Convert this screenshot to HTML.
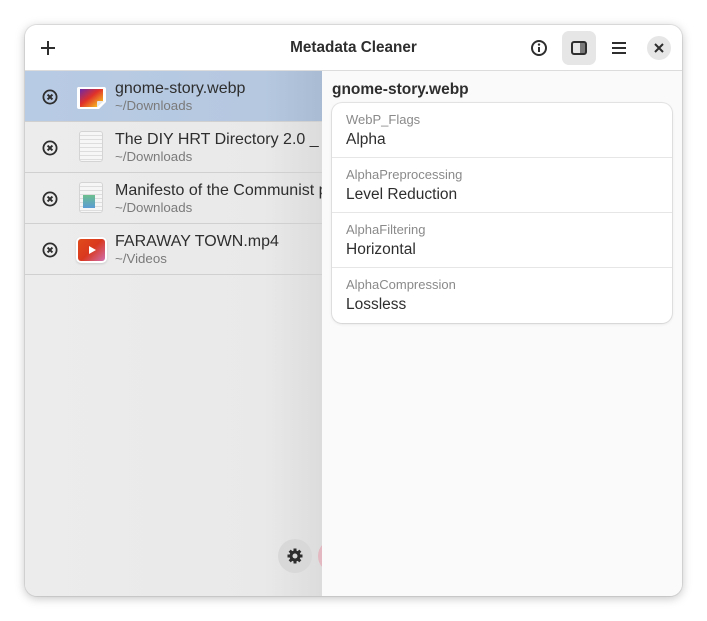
<!DOCTYPE html>
<html><head><meta charset="utf-8"><style>
*{box-sizing:border-box;margin:0;padding:0}
body{width:707px;height:621px;background:#fff;font-family:"Liberation Sans",sans-serif;position:relative;overflow:hidden}
.win{position:absolute;left:25px;top:25px;width:657px;height:571px;border-radius:12px;overflow:hidden;background:#fafafa;box-shadow:0 2px 10px rgba(0,0,0,.25),0 0 0 1px rgba(0,0,0,.08)}
.hdr{position:absolute;left:0;top:0;width:657px;height:46px;background:#fff;border-bottom:1px solid #dcdcdc}
.title{position:absolute;left:0;width:657px;top:14px;text-align:center;font-weight:bold;font-size:15.3px;color:#2e2e2e}
.left{position:absolute;left:0;top:46px;width:297px;height:525px;background:linear-gradient(to right,#ececec 0,#e9e9e9 240px,#dcdcdc 297px)}
.row{position:absolute;left:0;width:297px;height:51px;border-bottom:1px solid #d0d0d0}
.row .n{position:absolute;left:90px;top:9px;font-size:16px;color:#2e2e2e;white-space:nowrap}
.row .p{position:absolute;left:90px;top:27px;font-size:13.3px;color:#7a7a7a}
.ic{position:absolute;left:17px;top:18px}
.right{position:absolute;left:297px;top:46px;width:360px;height:525px;background:#fafafa}
.card{position:absolute;left:10px;top:32px;width:340px;height:220px;background:#fff;border-radius:10px;box-shadow:0 0 0 1px rgba(0,0,0,.08),0 1px 3px rgba(0,0,0,.1)}
.cr{height:55px;border-bottom:1px solid #e6e6e6;padding:9px 0 0 14px}
.cr:last-child{border-bottom:none}
.k{font-size:13px;color:#8a8a8a}
.v{font-size:15.5px;color:#2e2e2e;margin-top:4px}
</style></head><body>
<div class="win">
<div class="hdr">
 <svg style="position:absolute;left:15px;top:15px" width="16" height="16"><path d="M8 1v14M1 8h14" stroke="#2e2e2e" stroke-width="2"/></svg>
 <div class="title">Metadata Cleaner</div>
 <svg style="position:absolute;left:506px;top:15px" width="16" height="16"><circle cx="8" cy="8" r="7" fill="none" stroke="#2e2e2e" stroke-width="2"/><rect x="7" y="7" width="2" height="5" fill="#2e2e2e"/><circle cx="8" cy="4.6" r="1.2" fill="#2e2e2e"/></svg>
 <div style="position:absolute;left:537px;top:6px;width:34px;height:34px;border-radius:7px;background:#e6e6e6"></div>
 <svg style="position:absolute;left:546px;top:16px" width="16" height="14"><rect x="1" y="1" width="14" height="12" rx="2" fill="none" stroke="#2e2e2e" stroke-width="2"/><rect x="9" y="1" width="6" height="12" fill="#2e2e2e" opacity=".6"/></svg>
 <svg style="position:absolute;left:586px;top:16px" width="16" height="14"><path d="M1 2h14M1 7h14M1 12h14" stroke="#2e2e2e" stroke-width="2"/></svg>
 <div style="position:absolute;left:622px;top:11px;width:24px;height:24px;border-radius:50%;background:#e6e6e6"></div>
 <svg style="position:absolute;left:629px;top:18px" width="10" height="10"><path d="M1 1l8 8M9 1l-8 8" stroke="#2e2e2e" stroke-width="2"/></svg>
</div>
<div class="left">
 <div class="row" style="top:0;background:linear-gradient(to right,#b8cbe4 0,#b5c8e0 240px,#a9bbd3 297px)">
  <svg class="ic" width="16" height="16"><circle cx="8" cy="8" r="6.6" fill="none" stroke="#2e2e2e" stroke-width="1.8"/><path d="M5.6 5.6l4.8 4.8M10.4 5.6l-4.8 4.8" stroke="#2e2e2e" stroke-width="2"/></svg>
  <svg style="position:absolute;left:51px;top:15px" width="31" height="24"><defs><linearGradient id="g1" x1="0" y1="0" x2="1" y2="1"><stop offset="0" stop-color="#6b2aa8"/><stop offset=".45" stop-color="#e0302a"/><stop offset=".85" stop-color="#f5b323"/></linearGradient></defs><path d="M2 1h26a2 2 0 0 1 2 2v13l-7 7H3a2 2 0 0 1-2-2V3a2 2 0 0 1 1-2z" fill="#fff"/><path d="M4 3h23v12l-6 6H4z" fill="url(#g1)"/><path d="M21 21v-5a1 1 0 0 1 1-1h6z" fill="#e8e8e8"/></svg>
  <div class="n">gnome-story.webp</div><div class="p">~/Downloads</div></div>
 <div class="row" style="top:51px">
  <svg class="ic" width="16" height="16"><circle cx="8" cy="8" r="6.6" fill="none" stroke="#2e2e2e" stroke-width="1.8"/><path d="M5.6 5.6l4.8 4.8M10.4 5.6l-4.8 4.8" stroke="#2e2e2e" stroke-width="2"/></svg>
  <div style="position:absolute;left:54px;top:9px;width:24px;height:31px;border-radius:3px;background:repeating-linear-gradient(#f6f6f6 0 3px,#ddd 3px 4px);border:1px solid #d4d4d4"></div>
  <div class="n">The DIY HRT Directory 2.0 _ T</div><div class="p">~/Downloads</div></div>
 <div class="row" style="top:102px">
  <svg class="ic" width="16" height="16"><circle cx="8" cy="8" r="6.6" fill="none" stroke="#2e2e2e" stroke-width="1.8"/><path d="M5.6 5.6l4.8 4.8M10.4 5.6l-4.8 4.8" stroke="#2e2e2e" stroke-width="2"/></svg>
  <div style="position:absolute;left:54px;top:9px;width:24px;height:31px;border-radius:3px;background:repeating-linear-gradient(#f6f6f6 0 3px,#ddd 3px 4px);border:1px solid #d4d4d4"></div>
  <div style="position:absolute;left:58px;top:22px;width:12px;height:13px;background:linear-gradient(#6dbf8e,#5b9bd5)"></div>
  <div class="n">Manifesto of the Communist p</div><div class="p">~/Downloads</div></div>
 <div class="row" style="top:153px">
  <svg class="ic" width="16" height="16"><circle cx="8" cy="8" r="6.6" fill="none" stroke="#2e2e2e" stroke-width="1.8"/><path d="M5.6 5.6l4.8 4.8M10.4 5.6l-4.8 4.8" stroke="#2e2e2e" stroke-width="2"/></svg>
  <div style="position:absolute;left:53px;top:15px;width:27px;height:22px;border-radius:3px;background:linear-gradient(135deg,#e04b1a,#d9381e 50%,#d070b0);box-shadow:0 0 0 2px #fff,0 1px 2px 2px rgba(0,0,0,.15)"></div>
  <svg style="position:absolute;left:63px;top:22px" width="8" height="8"><path d="M1 0l7 4-7 4z" fill="#fff"/></svg>
  <div class="n">FARAWAY TOWN.mp4</div><div class="p">~/Videos</div></div>
 <div style="position:absolute;left:253px;top:468px;width:34px;height:34px;border-radius:50%;background:#d8d8d8"></div>
 <div style="position:absolute;left:293px;top:468px;width:34px;height:34px;border-radius:50%;background:#e3b8c0"></div>
 <svg style="position:absolute;left:262px;top:477px" width="16" height="16" viewBox="0 0 16 16"><g fill="#2e2e2e"><circle cx="8" cy="8" r="5.5"/><rect x="6.5" y="0.5" width="3" height="15"/><rect x="0.5" y="6.5" width="15" height="3"/><rect x="6.5" y="0.5" width="3" height="15" transform="rotate(45 8 8)"/><rect x="6.5" y="0.5" width="3" height="15" transform="rotate(-45 8 8)"/></g><circle cx="8" cy="8" r="2.5" fill="#d8d8d8"/></svg>
</div>
<div class="right">
 <div style="position:absolute;left:10px;top:10px;font-weight:bold;font-size:15.5px;color:#2e2e2e">gnome-story.webp</div>
 <div class="card">
  <div class="cr"><div class="k">WebP_Flags</div><div class="v">Alpha</div></div>
  <div class="cr"><div class="k">AlphaPreprocessing</div><div class="v">Level Reduction</div></div>
  <div class="cr"><div class="k">AlphaFiltering</div><div class="v">Horizontal</div></div>
  <div class="cr"><div class="k">AlphaCompression</div><div class="v">Lossless</div></div>
 </div>
</div>
</div>
</body></html>
